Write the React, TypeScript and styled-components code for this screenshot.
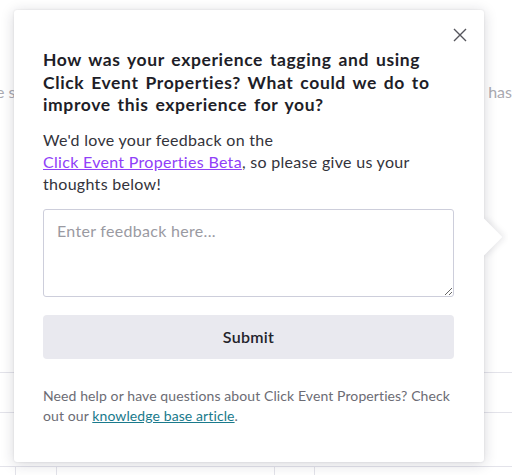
import styled, { createGlobalStyle } from "styled-components";

const GlobalStyle = createGlobalStyle`
  html, body {
    margin: 0;
    padding: 0;
    background: #ffffff;
  }
  body {
    font-family: Lato, "Open Sans", "Liberation Sans", sans-serif;
    -webkit-font-smoothing: antialiased;
  }
`;

const Page = styled.div`
  position: relative;
  width: 512px;
  height: 475px;
  overflow: hidden;
  background: #ffffff;
`;

// faded page content lying under the popover
const Backdrop = styled.div`
  display: flex;
  flex-direction: column;
  height: 100%;
  color: #a9a9b0;
  font-size: 16px;
`;

const BackText = styled.div`
  display: flex;
  justify-content: space-between;
  padding: 82px 0 0 0;
  height: 372px;
  flex-shrink: 0;
  box-sizing: border-box;
  margin-left: -4px;
`;

const TableRow = styled.div<{ $height: number }>`
  height: ${(p) => p.$height}px;
  flex-shrink: 0;
  box-sizing: border-box;
  border-top: 1px solid #e3e3ea;
  display: flex;
`;

const TableCell = styled.div<{ $width: number }>`
  width: ${(p) => p.$width}px;
  flex-shrink: 0;
  border-right: 1px solid #e3e3ea;
`;

const Popover = styled.div`
  position: absolute;
  left: 14px;
  top: 10px;
  width: 470px;
  height: 452px;
  box-sizing: border-box;
  background: #ffffff;
  border-radius: 3px;
  box-shadow: 0 2px 14px rgba(30, 30, 50, 0.18), 0 0 2px rgba(30, 30, 50, 0.12);
  padding: 39px 30px 0 29px;
`;

const ArrowBox = styled.div`
  position: absolute;
  left: 100%;
  top: 205px;
  width: 24px;
  height: 44px;
  overflow: hidden;
`;

const ArrowTip = styled.div`
  position: absolute;
  left: -13px;
  top: 9px;
  width: 26px;
  height: 26px;
  transform: rotate(45deg);
  background: #ffffff;
  box-shadow: 2px -2px 6px rgba(30, 30, 50, 0.1);
`;

const CloseButton = styled.button`
  position: absolute;
  top: 14px;
  right: 13px;
  width: 22px;
  height: 22px;
  padding: 0;
  border: none;
  background: none;
  display: flex;
  align-items: center;
  justify-content: center;
  cursor: pointer;
`;

const Heading = styled.h2`
  margin: 0 0 12px;
  font-size: 17.5px;
  line-height: 22.5px;
  font-weight: 700;
  letter-spacing: 0.62px;
  word-spacing: 2px;
  color: #1e1e28;
`;

const Body = styled.p`
  margin: 0 0 14px;
  font-size: 16px;
  line-height: 22px;
  letter-spacing: 0.3px;
  color: #33333b;
`;

const BetaLink = styled.a`
  color: #9040f8;
  text-decoration: underline;
`;

const Feedback = styled.textarea`
  display: block;
  width: 100%;
  height: 88px;
  box-sizing: border-box;
  border: 1px solid #cdcedb;
  border-radius: 3px;
  padding: 10px 13px;
  font-family: inherit;
  font-size: 16px;
  line-height: 22px;
  letter-spacing: 0.3px;
  color: #33333b;
  resize: vertical;
  margin: 0 0 18px;

  &::placeholder {
    color: #9a9aa2;
  }
`;

const SubmitButton = styled.button`
  display: block;
  width: 100%;
  height: 44px;
  border: none;
  border-radius: 4px;
  background: #e9e9ef;
  font-family: inherit;
  font-size: 16px;
  font-weight: 600;
  letter-spacing: 0.3px;
  color: #23232b;
  cursor: pointer;
  margin: 0 0 27px;
`;

const Footer = styled.p`
  margin: 0;
  font-size: 14px;
  line-height: 20px;
  letter-spacing: 0.1px;
  color: #6c6c74;
`;

const KbLink = styled.a`
  color: #1a7a8c;
  text-decoration: underline;
`;

function App() {
  return (
    <>
      <GlobalStyle />
      <Page>
        <Backdrop>
          <BackText>
            <span>e s</span>
            <span>has</span>
          </BackText>
          <TableRow $height={40} />
          <TableRow $height={54} />
          <TableRow $height={20}>
            <TableCell $width={15} />
            <TableCell $width={40} />
            <TableCell $width={217} />
            <TableCell $width={39} />
          </TableRow>
        </Backdrop>

        <Popover>
          <ArrowBox>
            <ArrowTip />
          </ArrowBox>
          <CloseButton aria-label="Close">
            <svg width="14" height="14" viewBox="0 0 14 14">
              <path d="M1 1 L13 13 M13 1 L1 13" stroke="#55555c" strokeWidth="1.4" />
            </svg>
          </CloseButton>

          <Heading>
            How was your experience tagging and using Click Event Properties? What could we do to
            improve this experience for you?
          </Heading>

          <Body>
            We'd love your feedback on the
            <br />
            <BetaLink href="#">Click Event Properties Beta</BetaLink>, so please give us your
            thoughts below!
          </Body>

          <Feedback placeholder="Enter feedback here..." />

          <SubmitButton>Submit</SubmitButton>

          <Footer>
            Need help or have questions about Click Event Properties? Check out our{" "}
            <KbLink href="#">knowledge base article</KbLink>.
          </Footer>
        </Popover>
      </Page>
    </>
  );
}

export default App;
